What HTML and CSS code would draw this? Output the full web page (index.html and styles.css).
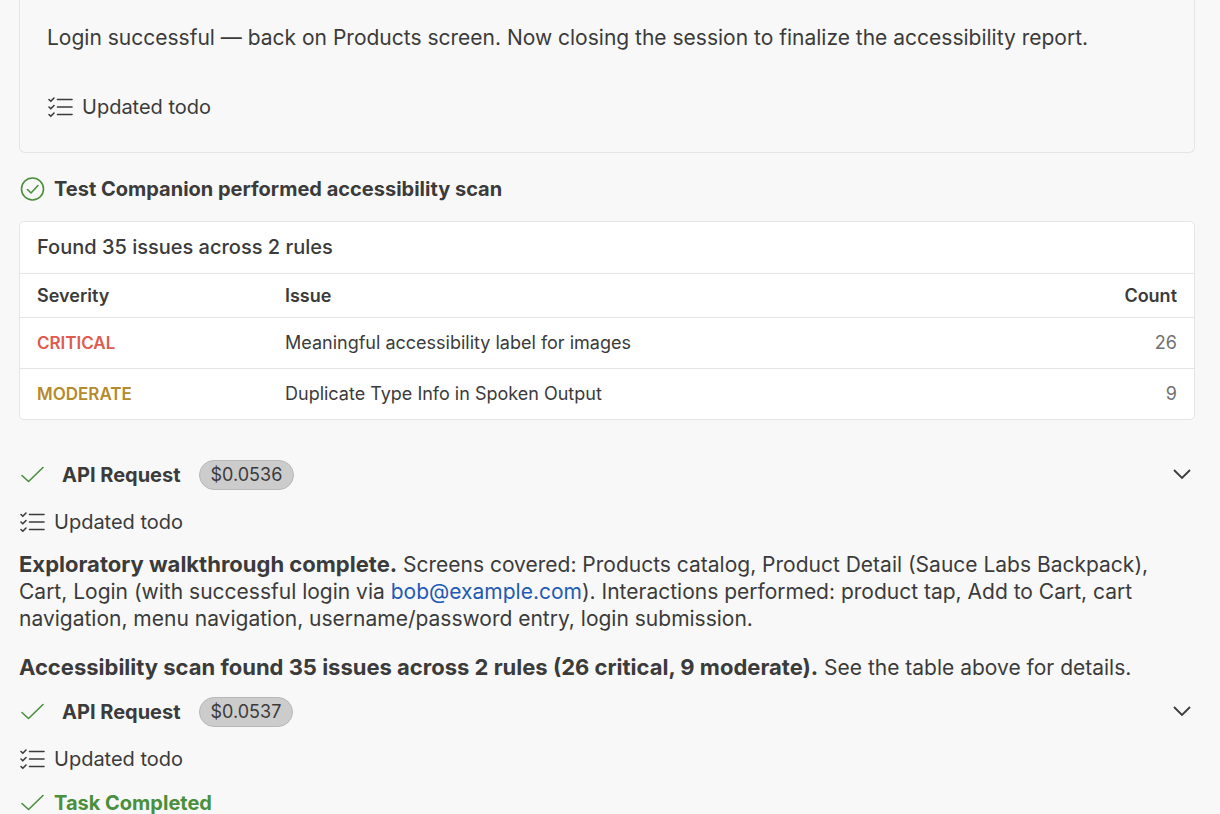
FILE: index.html
```html
<!DOCTYPE html>
<html lang="en">
<head>
    <meta charset="UTF-8">
    <meta name="viewport" content="width=device-width, initial-scale=1.0">
    <title>Test Companion</title>
    <link rel="stylesheet" href="styles.css">
</head>
<body>
    <!-- shared icons -->
    <svg class="sprite" aria-hidden="true">
        <symbol id="icon-todo" viewBox="0 0 26 24">
            <path d="M2 4.5l1.8 1.8L7 3M2 12l1.8 1.8L7 10.5M2 19.5l1.8 1.8L7 18M10.5 4.5H25M10.5 12H25M10.5 19.5H25"/>
        </symbol>
        <symbol id="icon-check" viewBox="0 0 26 24">
            <path d="M3 12.5l6.5 6L24 4.5"/>
        </symbol>
        <symbol id="icon-circle-check" viewBox="0 0 26 24">
            <circle cx="13.5" cy="12" r="11"/>
            <path d="M8.5 12.5l3.5 3.5L19 8.5"/>
        </symbol>
        <symbol id="icon-chevron" viewBox="0 0 20 20">
            <path d="M2 5l8 8 8-8"/>
        </symbol>
    </svg>

    <main class="chat">
        <section class="panel">
            <p class="message">Login successful — back on Products screen. Now closing the session to finalize the accessibility report.</p>
            <div class="todo">
                <svg class="icon"><use href="#icon-todo"/></svg>
                <span>Updated todo</span>
            </div>
        </section>

        <h2 class="scan-title">
            <svg class="icon icon-green"><use href="#icon-circle-check"/></svg>
            <span>Test Companion performed accessibility scan</span>
        </h2>

        <section class="card">
            <p class="card-summary">Found 35 issues across 2 rules</p>
            <table class="issues">
                <thead>
                    <tr>
                        <th class="col-severity">Severity</th>
                        <th>Issue</th>
                        <th class="col-count">Count</th>
                    </tr>
                </thead>
                <tbody>
                    <tr>
                        <td class="severity critical">CRITICAL</td>
                        <td>Meaningful accessibility label for images</td>
                        <td class="col-count">26</td>
                    </tr>
                    <tr>
                        <td class="severity moderate">MODERATE</td>
                        <td>Duplicate Type Info in Spoken Output</td>
                        <td class="col-count">9</td>
                    </tr>
                </tbody>
            </table>
        </section>

        <div class="request request-first">
            <svg class="icon icon-green"><use href="#icon-check"/></svg>
            <strong class="request-name">API Request</strong>
            <span class="cost">$0.0536</span>
            <button type="button" class="toggle" aria-label="Show request details">
                <svg class="chevron"><use href="#icon-chevron"/></svg>
            </button>
        </div>

        <div class="todo">
            <svg class="icon"><use href="#icon-todo"/></svg>
            <span>Updated todo</span>
        </div>

        <div class="result">
            <p class="message"><strong>Exploratory walkthrough complete.</strong> Screens covered: Products catalog, Product Detail (Sauce Labs Backpack), Cart, Login (with successful login via <a href="mailto:bob@example.com">bob@example.com</a>). Interactions performed: product tap, Add to Cart, cart navigation, menu navigation, username/password entry, login submission.</p>
            <p class="message"><strong>Accessibility scan found 35 issues across 2 rules (26 critical, 9 moderate).</strong> See the table above for details.</p>
        </div>

        <div class="request">
            <svg class="icon icon-green"><use href="#icon-check"/></svg>
            <strong class="request-name">API Request</strong>
            <span class="cost">$0.0537</span>
            <button type="button" class="toggle" aria-label="Show request details">
                <svg class="chevron"><use href="#icon-chevron"/></svg>
            </button>
        </div>

        <div class="todo">
            <svg class="icon"><use href="#icon-todo"/></svg>
            <span>Updated todo</span>
        </div>

        <div class="todo completed">
            <svg class="icon icon-green"><use href="#icon-check"/></svg>
            <strong>Task Completed</strong>
        </div>
    </main>
</body>
</html>
```
FILE: styles.css
```css
* { margin: 0; padding: 0; box-sizing: border-box; }
body { font-family: Inter, "Liberation Sans", sans-serif; font-size: 20px; line-height: 24px; color: #3b3b3b; background: #f8f8f8; height: 100vh; overflow: hidden; }
strong { font-weight: 700; }
a { color: #1f5bb5; text-decoration: none; }
a:hover { text-decoration: underline; }

.sprite { display: none; }
.icon { width: 26px; height: 24px; flex: none; fill: none; stroke: currentColor; stroke-width: 1.6; stroke-linecap: round; stroke-linejoin: round; }
.icon-green { color: #4a8f3c; }

.chat { padding: 0 25px 0 19px; }
.panel { border: 1px solid #e5e5e5; border-top: none; border-radius: 0 0 6px 6px; padding: 24px 27px 33px; }
.message { font-size: 21px; line-height: 27px; }
.message strong { font-size: 22px; }
.todo { display: flex; align-items: center; gap: 9px; margin-top: 20px; }
.panel .todo { margin-top: 44px; }

.scan-title { display: flex; align-items: center; gap: 9px; margin: 22px 0 18px; font-size: 20px; line-height: 28px; font-weight: 700; }

.card { background: #fff; border: 1px solid #e5e5e5; border-radius: 5px; overflow: hidden; }
.card-summary { padding: 13px 17px; line-height: 25px; font-weight: 500; }
.issues { width: 100%; border-collapse: collapse; font-size: 18px; }
.issues th, .issues td { height: 51px; padding: 0 17px; border-top: 1px solid #e5e5e5; text-align: left; }
.issues th { height: 44px; font-weight: 600; }
.issues tr:last-child td { height: 50px; }
.issues .col-severity { width: 248px; }
.issues .col-count { width: 120px; text-align: right; }
td.col-count { color: #717171; }
.issues .severity { font-size: 17px; font-weight: 600; }
.critical { color: #e05a4f; }
.moderate { color: #b58a2a; }

.request { display: flex; align-items: center; height: 30px; }
.request-first { margin-top: 40px; }
.request-name { margin: 0 18px 0 17px; }
.cost { padding: 0 11px; line-height: 28px; font-size: 18px; background: #cccccc; border: 1px solid #b8b8b8; border-radius: 15px; }
.toggle { display: flex; margin-left: auto; padding: 3px; color: #3b3b3b; background: none; border: none; cursor: pointer; }
.chevron { width: 20px; height: 20px; fill: none; stroke: currentColor; stroke-width: 1.8; }

.result { display: flex; flex-direction: column; gap: 22px; margin: 17px 0 16px; }
.completed { color: #4a8f3c; }
```
